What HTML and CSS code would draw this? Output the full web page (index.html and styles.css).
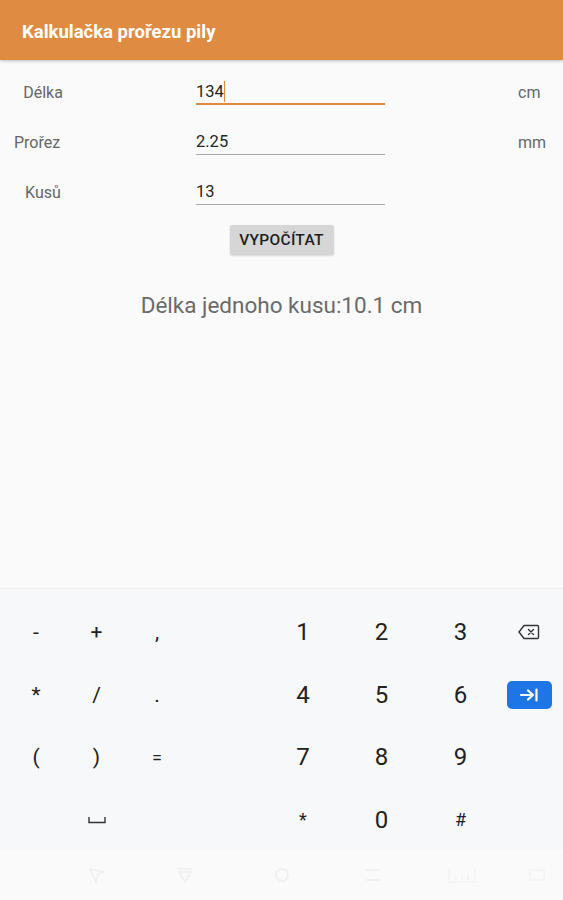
FILE: index.html
```html
<!DOCTYPE html>
<html lang="cs">
<head>
  <meta charset="UTF-8" />
  <meta name="viewport" content="width=device-width, initial-scale=1.0" />
  <title>Kalkulačka prořezu pily</title>
  <link rel="stylesheet" href="styles.css">
</head>
<body>
  <div class="screen">

    <!-- Lišta aplikace -->
    <header class="app-bar">Kalkulačka prořezu pily</header>

    <!-- Formulář -->
    <main class="content">
      <div class="form-row">
        <span class="label">Délka</span>
        <div class="field active">134<span class="caret"></span></div>
        <span class="unit">cm</span>
      </div>
      <div class="form-row">
        <span class="label wide">Prořez</span>
        <div class="field">2.25</div>
        <span class="unit">mm</span>
      </div>
      <div class="form-row">
        <span class="label">Kusů</span>
        <div class="field">13</div>
        <span class="unit"></span>
      </div>

      <div class="button-row">
        <button class="calc-button">VYPOČÍTAT</button>
      </div>

      <p class="result">Délka jednoho kusu:10.1 cm</p>
    </main>

    <!-- Klávesnice -->
    <section class="keyboard">
      <div class="key sym">-</div>
      <div class="key sym">+</div>
      <div class="key sym">,</div>
      <div class="spacer"></div>
      <div class="key digit">1</div>
      <div class="key digit">2</div>
      <div class="key digit">3</div>
      <div class="key">
        <svg width="22" height="16" viewBox="0 0 22 16">
          <path d="M6 1.5h13.5a1 1 0 0 1 1 1v11a1 1 0 0 1-1 1H6L1 8z" fill="none" stroke="#333" stroke-width="1.4" stroke-linejoin="round"/>
          <path d="M10.5 5.5l5 5M15.5 5.5l-5 5" stroke="#333" stroke-width="1.4" stroke-linecap="round"/>
        </svg>
      </div>

      <div class="key sym">*</div>
      <div class="key sym">/</div>
      <div class="key sym">.</div>
      <div class="spacer"></div>
      <div class="key digit">4</div>
      <div class="key digit">5</div>
      <div class="key digit">6</div>
      <div class="key">
        <div class="tab-key">
          <svg width="20" height="14" viewBox="0 0 20 14">
            <path d="M2 7h12M9 2.5L14 7l-5 4.5" fill="none" stroke="#fff" stroke-width="2.2" stroke-linecap="round" stroke-linejoin="round"/>
            <path d="M17.5 1.5v11" stroke="#fff" stroke-width="2.2" stroke-linecap="round"/>
          </svg>
        </div>
      </div>

      <div class="key sym">(</div>
      <div class="key sym">)</div>
      <div class="key sym small">=</div>
      <div class="spacer"></div>
      <div class="key digit">7</div>
      <div class="key digit">8</div>
      <div class="key digit">9</div>
      <div class="key"></div>

      <div class="key"></div>
      <div class="key">
        <svg width="18" height="8" viewBox="0 0 18 8">
          <path d="M1 1v5.5h16V1" fill="none" stroke="#333" stroke-width="1.4"/>
        </svg>
      </div>
      <div class="key"></div>
      <div class="spacer"></div>
      <div class="key sym small">*</div>
      <div class="key digit">0</div>
      <div class="key sym small">#</div>
      <div class="key"></div>
    </section>

    <!-- Navigační lišta -->
    <nav class="nav-bar">
      <div class="nav-item nav-pin"><svg width="18" height="18" viewBox="0 0 18 18"><path d="M2 3l14 3-6 2-2 8z" fill="none" stroke="#eceef0" stroke-width="1.5"/></svg></div>
      <div class="nav-item nav-hide"><svg width="18" height="18" viewBox="0 0 18 18"><path d="M2 3h14M3 6h12l-6 10z" fill="none" stroke="#eceef0" stroke-width="1.5"/></svg></div>
      <div class="nav-item nav-home"><svg width="18" height="18" viewBox="0 0 18 18"><circle cx="9" cy="9" r="6" fill="none" stroke="#eceef0" stroke-width="1.5"/></svg></div>
      <div class="nav-item nav-recent"><svg width="18" height="18" viewBox="0 0 18 18"><path d="M2 4h14M2 14h14" fill="none" stroke="#eceef0" stroke-width="1.5"/></svg></div>
      <div class="nav-item nav-kbd"><svg width="30" height="18" viewBox="0 0 30 18"><path d="M2 2v14h26V2M9 10v4M15 8v6M21 10v4" fill="none" stroke="#f1f2f4" stroke-width="1.5"/></svg></div>
      <div class="nav-item nav-screen"><svg width="18" height="18" viewBox="0 0 18 18"><rect x="2" y="4" width="14" height="10" fill="none" stroke="#f1f2f4" stroke-width="1.5"/></svg></div>
    </nav>
  </div>
</body>
</html>
```

FILE: styles.css
```css
* { margin: 0; padding: 0; box-sizing: border-box; }

html, body {
  width: 100%;
  height: 100%;
  background: #fafafa;
  font-family: Roboto, "Noto Sans", sans-serif;
  overflow: hidden;
}

.screen {
  height: 900px;
  display: flex;
  flex-direction: column;
}

.app-bar {
  height: 60px;
  flex-shrink: 0;
  background: #df8c42;
  color: #fff;
  font-size: 18.5px;
  font-weight: 700;
  display: flex;
  align-items: center;
  padding: 3px 0 0 22px;
  box-shadow: 0 1px 3px rgba(0, 0, 0, 0.25);
  position: relative;
  z-index: 1;
}

.content {
  flex: 1;
  padding-top: 7px;
}

.form-row {
  height: 50px;
  display: flex;
  align-items: center;
}

.label {
  width: 86px;
  text-align: center;
  font-size: 16px;
  color: #666;
}

.label.wide {
  width: 74px;
}

.field {
  width: 189px;
  height: 25px;
  margin-left: 110px;
  border-bottom: 1px solid #a8a8a8;
  font-size: 16.5px;
  line-height: 22px;
  color: #262626;
  display: flex;
  align-items: center;
  align-self: flex-end;
  margin-bottom: 12px;
}

.label.wide + .field {
  margin-left: 122px;
}

.field.active {
  border-bottom: 2px solid #e08a3c;
}

.caret {
  display: inline-block;
  width: 1.5px;
  height: 21px;
  background: #e08a3c;
}

.unit {
  margin-left: 133px;
  font-size: 16px;
  color: #666;
}

.button-row {
  display: flex;
  justify-content: center;
  padding-top: 8px;
}

.calc-button {
  width: 104px;
  height: 30px;
  border: none;
  border-radius: 2px;
  background: #d6d6d6;
  color: #1e1e1e;
  font-family: Roboto, "Noto Sans", sans-serif;
  font-size: 15.5px;
  font-weight: 500;
  letter-spacing: 0.3px;
  box-shadow: 0 1px 2px rgba(0, 0, 0, 0.15);
}

.result {
  margin-top: 37px;
  text-align: center;
  font-size: 22.5px;
  color: #6a6a6a;
}

.keyboard {
  height: 262px;
  flex-shrink: 0;
  background: #f7f8fa;
  border-top: 1px solid #f0f0f1;
  padding: 12px 5px 0 6px;
  display: grid;
  grid-template-columns: 60px 61px 60px 77px 78px 79px 79px 58px;
  grid-auto-rows: 62.5px;
  align-items: center;
}

.key {
  display: flex;
  justify-content: center;
  align-items: center;
  color: #222;
}

.digit { font-size: 24px; }
.sym { font-size: 21px; }
.sym.small { font-size: 18px; }

.tab-key {
  width: 45px;
  height: 28px;
  border-radius: 5px;
  background: #1e76e6;
  display: flex;
  justify-content: center;
  align-items: center;
}

.nav-bar {
  height: 50px;
  flex-shrink: 0;
  background: #fafafa;
  display: flex;
  align-items: center;
  padding-left: 54px;
}

.nav-item {
  display: flex;
  justify-content: center;
  flex-shrink: 0;
}

.nav-pin { width: 86px; }
.nav-hide { width: 90px; }
.nav-home { width: 104px; }
.nav-recent { width: 78px; }
.nav-kbd { width: 99px; }
.nav-screen { width: 52px; }
```
